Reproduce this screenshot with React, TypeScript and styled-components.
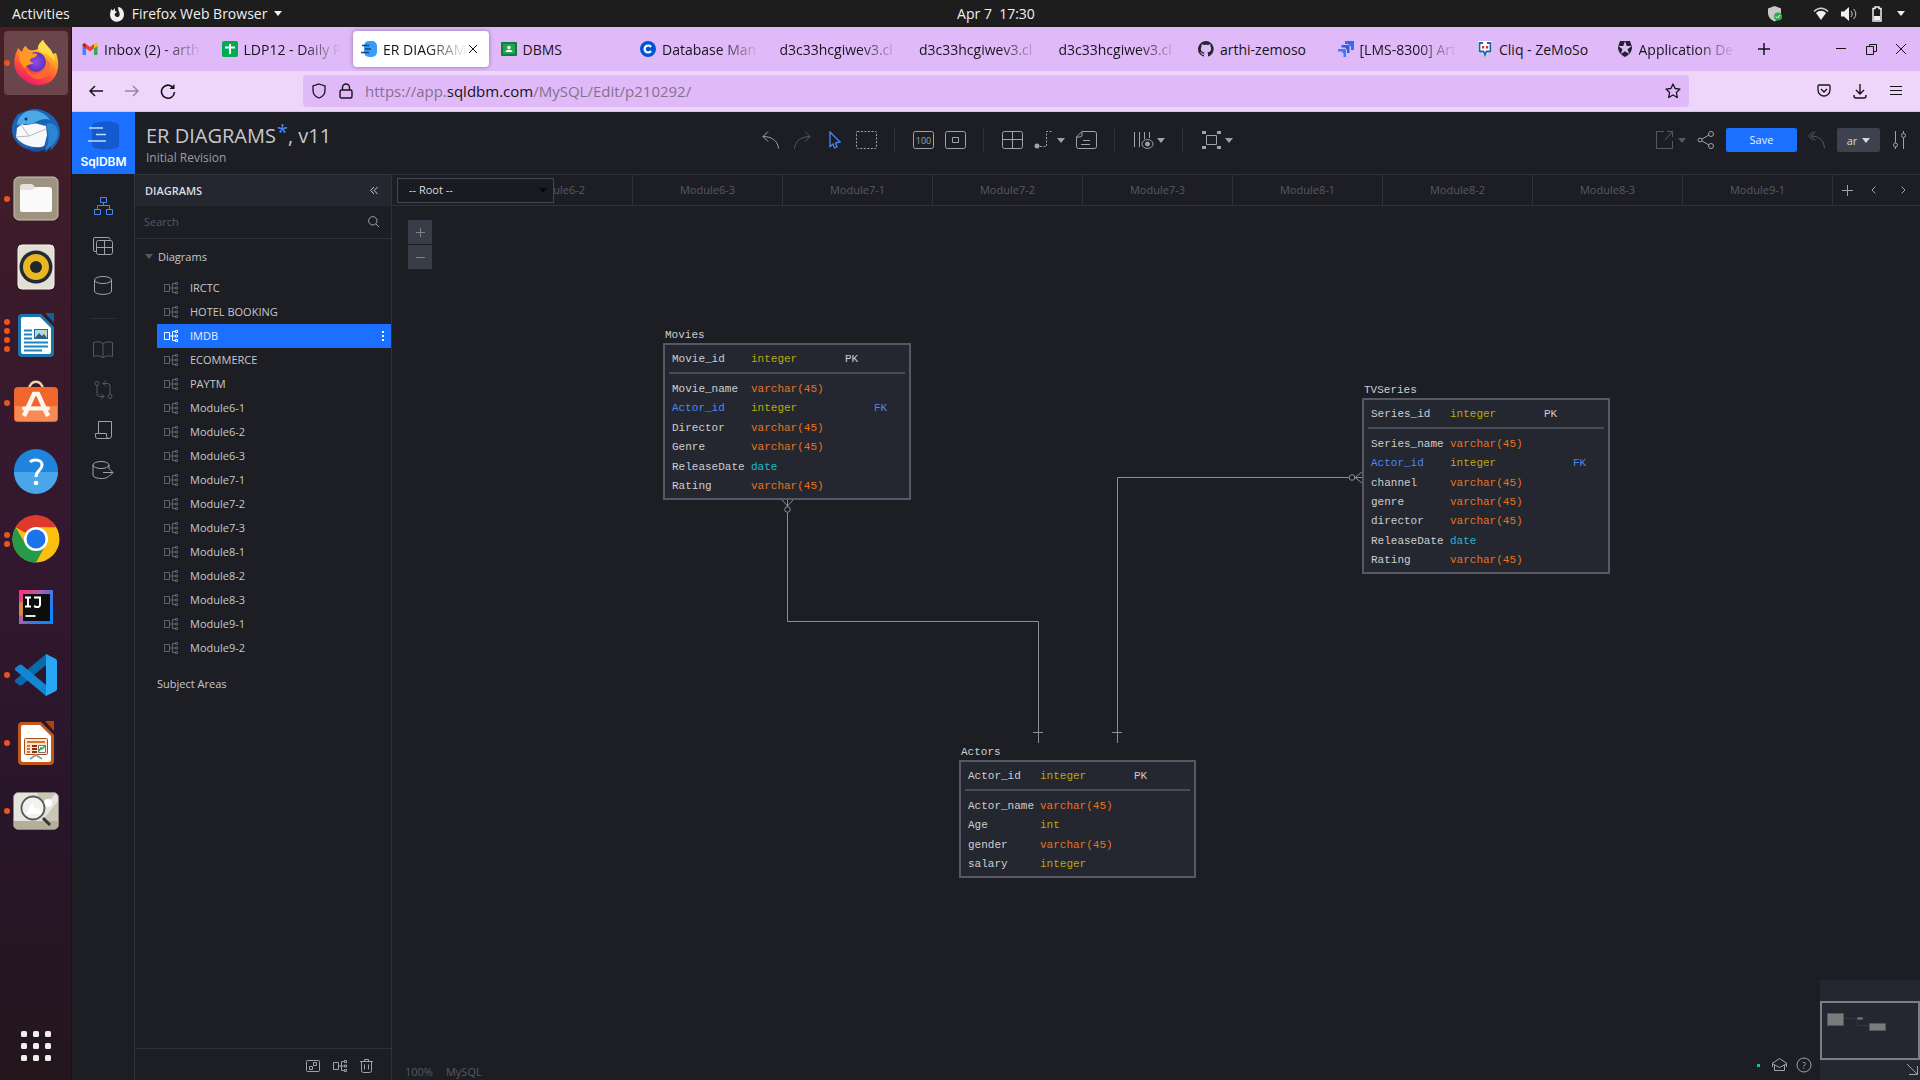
import React from "react";
import styled, { createGlobalStyle } from "styled-components";

const c = {
  bg: "#1d1e23",
  panel: "#24272f",
  line: "#2f323a",
  blue: "#1b70ff",
  link: "#4a86f7",
  text: "#c6c8cc",
  icon: "#9fa2a8",
  dim: "#565965",
  tabBar: "#e0baf8",
  navBar: "#eed5fa",
};

const Global = createGlobalStyle`
  * { box-sizing: border-box; }
  html, body, #root { height: 100%; }
  body { margin: 0; overflow: hidden; background: ${c.bg}; font-family: "Open Sans", "Noto Sans", sans-serif; }
  button { border: 0; padding: 0; background: none; color: inherit; font: inherit; cursor: pointer; }
  ul { list-style: none; margin: 0; padding: 0; }
  svg { display: block; flex: none; }
`;

const Desktop = styled.div`
  display: grid;
  grid-template: 27px minmax(0, 1fr) / 72px minmax(0, 1fr);
  height: 100vh;
`;

/* ---------- shared ---------- */
const Line = styled.svg<{ $weight?: number }>`
  fill: none;
  stroke: currentColor;
  stroke-width: ${(p) => p.$weight || 1};
`;
const Caret = () => (
  <svg width="8" height="5" viewBox="0 0 8 5" fill="currentColor"><path d="M0 0h8L4 5z" /></svg>
);

/* ---------- system bar ---------- */
const SystemBar = styled.header`
  grid-column: 1 / -1;
  display: grid;
  grid-template-columns: 1fr 80px calc(50% - 76px);
  align-items: center;
  background: #1d1d1d;
  color: #f0f0f0;
  font-size: 14px;
`;
const SystemMenus = styled.nav`
  display: flex;
  align-items: center;
  gap: 39px;
  padding-left: 12px;
`;
const SystemMenu = styled.button`
  display: flex;
  align-items: center;
  gap: 7px;
`;
const Clock = styled.time`
  text-align: center;
  white-space: pre;
`;
const Tray = styled.div`
  display: flex;
  align-items: center;
  justify-content: flex-end;
  gap: 12px;
  padding-right: 15px;
`;
const TrayGap = styled.span`
  width: 6px;
`;

/* ---------- dock ---------- */
const Dock = styled.nav`
  display: flex;
  flex-direction: column;
  gap: 4px;
  padding: 4px 4px 2px;
  background: linear-gradient(#471f24 0, #3a1a2a 25%, #32182f 50%, #28152a 75%, #24161c 100%);
  border-right: 1px solid #1a1216;
`;
const DockButton = styled.button<{ $active?: boolean }>`
  display: grid;
  grid-template-columns: 6px 48px 6px;
  justify-content: space-between;
  align-items: center;
  width: 64px;
  height: 64px;
  border-radius: 4px;
  background: ${(p) => (p.$active ? "#6a4549" : "none")};
`;
const Dots = styled.span`
  display: grid;
  gap: 3px;
`;
const Dot = styled.i`
  width: 6px;
  height: 6px;
  border-radius: 50%;
  background: #e95420;
`;
const DockSpring = styled.div`
  flex: 1;
`;

/* ---------- browser ---------- */
const Browser = styled.main`
  display: flex;
  flex-direction: column;
  min-width: 0;
  min-height: 0;
`;
const BrowserTabs = styled.div`
  display: flex;
  height: 44px;
  background: ${c.tabBar};
  color: #15141a;
`;
const TabStrip = styled.div`
  display: flex;
  flex: 1;
  min-width: 0;
  padding: 4px 0;
`;
const BrowserTab = styled.button<{ $active?: boolean }>`
  display: flex;
  flex: 1 1 0;
  min-width: 0;
  align-items: center;
  gap: 6px;
  margin: 0 2px;
  padding: 0 8px;
  border-radius: 4px;
  font-size: 14px;
  background: ${(p) => (p.$active ? "#fff" : "none")};
  box-shadow: ${(p) => (p.$active ? "0 0 4px rgba(70, 30, 100, 0.5)" : "none")};
`;
const TabLabel = styled.span<{ $fade?: boolean }>`
  flex: 1;
  min-width: 0;
  overflow: hidden;
  text-align: left;
  white-space: nowrap;
  mask-image: ${(p) => (p.$fade ? "linear-gradient(to left, transparent 0, #000 40px)" : "none")};
`;
const TabClose = styled(Line)`
  margin: 0 4px 0 -4px;
`;
const WindowControls = styled.div`
  display: grid;
  grid-template-columns: 36px 1fr 30px 30px 30px;
  width: 174px;
  padding-right: 4px;
  align-items: center;
  justify-items: center;
`;
const NavBar = styled.div`
  display: grid;
  grid-template-columns: 1fr 6fr 1fr;
  align-items: center;
  height: 41px;
  border-bottom: 1px solid #dfbdf3;
  background: ${c.navBar};
  color: #15141a;
`;
const NavButtons = styled.div<{ $end?: boolean }>`
  display: flex;
  justify-content: ${(p) => (p.$end ? "flex-end" : "flex-start")};
  padding: 0 6px;
`;
const NavButton = styled.button<{ $off?: boolean }>`
  display: grid;
  place-items: center;
  width: 36px;
  height: 32px;
  opacity: ${(p) => (p.$off ? 0.4 : 1)};
`;
const UrlBar = styled.div`
  display: flex;
  align-items: center;
  gap: 12px;
  height: 32px;
  padding: 0 8px;
  border-radius: 4px;
  background: ${c.tabBar};
`;
const Url = styled.div`
  flex: 1;
  font-size: 15px;
  color: #86708f;
  outline: none;
`;
const Domain = styled.span`
  color: #15141a;
`;

/* ---------- app ---------- */
const AppShell = styled.div`
  display: flex;
  flex: 1;
  flex-direction: column;
  min-height: 0;
  background: ${c.bg};
  color: ${c.text};
`;
const AppHeader = styled.header`
  display: grid;
  grid-template-columns: 1fr auto 1fr;
  align-items: center;
  height: 62px;
`;
const Brand = styled.div`
  display: flex;
  height: 62px;
  gap: 11px;
`;
const Logo = styled.a`
  display: flex;
  flex-direction: column;
  align-items: center;
  width: 63px;
  padding-top: 9px;
  background: ${c.blue};
  color: #fff;
  font: 600 12px/16px "Inter", sans-serif;
  text-decoration: none;
`;
const LogoText = styled.span`
  margin-top: 4px;
`;
const Titles = styled.div`
  display: flex;
  flex-direction: column;
  padding-top: 10px;
`;
const Title = styled.h1`
  margin: 0;
  font-size: 20px;
  font-weight: 400;
  line-height: 28px;
`;
const Star = styled.sup`
  margin-left: 1px;
  color: ${c.link};
  line-height: 0;
  vertical-align: 4px;
  font-size: 20px;
`;
const Subtitle = styled.span`
  font-size: 12px;
  line-height: 16px;
  color: #9a9da3;
`;
const Tools = styled.div<{ $end?: boolean }>`
  display: flex;
  align-items: center;
  justify-content: ${(p) => (p.$end ? "flex-end" : "center")};
  gap: 11px;
  padding: ${(p) => (p.$end ? "0 12px 6px 0" : "0 0 6px 1px")};
  color: ${c.icon};
`;
const Tool = styled.button<{ $tone?: string; $w?: number }>`
  display: flex;
  align-items: center;
  justify-content: ${(p) => (p.$w ? "space-between" : "center")};
  min-width: ${(p) => p.$w || 21}px;
  height: 24px;
  color: ${(p) => p.$tone || "inherit"};
`;
const Divider = styled.span`
  width: 1px;
  height: 24px;
  margin: 0 7px 0 6px;
  background: ${c.line};
`;
const SaveButton = styled.button`
  width: 71px;
  height: 24px;
  padding-bottom: 2px;
  border-radius: 2px;
  background: ${c.blue};
  color: #e8f0ff;
  font-size: 11px;
`;
const UserButton = styled.button`
  display: flex;
  align-items: center;
  justify-content: center;
  gap: 5px;
  width: 43px;
  height: 24px;
  border-radius: 2px;
  background: #3d424e;
  color: #d5d7da;
  font-size: 11px;
`;
const Workspace = styled.div`
  display: grid;
  grid-template-columns: 62px 258px minmax(0, 1fr);
  flex: 1;
  min-height: 0;
`;
const Rail = styled.nav`
  display: flex;
  flex-direction: column;
  align-items: center;
  padding-top: 12px;
`;
const RailButton = styled.button<{ $tone?: string }>`
  display: grid;
  place-items: center;
  width: 40px;
  height: 40px;
  color: ${(p) => p.$tone || c.icon};
`;
const RailRule = styled.hr`
  width: 24px;
  margin: 12px 0 11px;
  border: 0;
  border-top: 1px solid ${c.line};
`;
const SidePanel = styled.aside`
  display: flex;
  flex-direction: column;
  border: solid ${c.line};
  border-width: 1px 1px 0;
  font-size: 11px;
`;
const PanelHead = styled.div`
  display: flex;
  align-items: center;
  justify-content: space-between;
  height: 31px;
  padding: 0 13px 0 10px;
  background: ${c.panel};
`;
const PanelTitle = styled.h2`
  margin: 0;
  font-size: 11px;
  font-weight: 600;
  color: #dcdde0;
`;
const SearchBox = styled.label`
  display: flex;
  align-items: center;
  height: 33px;
  padding: 0 12px 2px 9px;
  border-bottom: 1px solid ${c.line};
  color: ${c.icon};
`;
const SearchInput = styled.input`
  flex: 1;
  min-width: 0;
  padding: 0;
  border: 0;
  outline: 0;
  background: none;
  color: ${c.text};
  font: 11px "Open Sans", sans-serif;
  &::placeholder { color: ${c.dim}; opacity: 1; }
`;
const Tree = styled.div`
  flex: 1;
  padding: 6px 0 0 22px;
`;
const TreeHeading = styled.button<{ $plain?: boolean }>`
  display: flex;
  align-items: center;
  gap: 5px;
  height: 24px;
  padding-bottom: 2px;
  margin-left: ${(p) => (p.$plain ? "0" : "-12px")};
  color: ${c.text};
  & > svg { color: ${c.dim}; }
`;
const TreeList = styled.ul`
  padding: 7px 0 12px;
`;
const TreeItem = styled.button<{ $active?: boolean }>`
  display: flex;
  align-items: center;
  gap: 12px;
  width: 100%;
  height: 24px;
  padding: 0 6px 0 7px;
  background: ${(p) => (p.$active ? c.blue : "none")};
  color: ${(p) => (p.$active ? "#e6efff" : c.text)};
  & > svg { color: ${(p) => (p.$active ? "#fff" : "#62656f")}; }
`;
const TreeLabel = styled.span`
  flex: 1;
  padding-bottom: 2px;
  text-align: left;
`;
const PanelFoot = styled.div`
  display: flex;
  align-items: center;
  justify-content: flex-end;
  gap: 13px;
  height: 32px;
  padding: 2px 18px 0;
  border-top: 1px solid ${c.line};
  color: ${c.icon};
`;
const Stage = styled.section`
  display: flex;
  flex-direction: column;
  min-width: 0;
  min-height: 0;
`;
const DiagramTabs = styled.div`
  display: flex;
  height: 32px;
  border: solid ${c.line};
  border-width: 1px 0;
  color: ${c.dim};
  font-size: 11px;
`;
const RootPicker = styled.div`
  display: grid;
  grid-template-columns: 1fr;
  align-items: center;
  flex: none;
  width: 162px;
  padding-left: 5px;
  color: #08090b;
  & > * { grid-area: 1 / 1; }
  & > svg { justify-self: end; margin-right: 7px; pointer-events: none; z-index: 1; }
`;
const RootSelect = styled.select`
  width: 157px;
  height: 25px;
  padding: 0 11px 2px;
  appearance: none;
  border: 1px solid #434753;
  border-radius: 0;
  background: #1a1b20;
  color: #dadbde;
  font: 11px "Open Sans", sans-serif;
`;
const TabScroller = styled.div`
  display: flex;
  flex: 1;
  justify-content: flex-end;
  min-width: 0;
  overflow: hidden;
`;
const DiagramTab = styled.button`
  flex: none;
  width: 150px;
  padding-bottom: 2px;
  border-right: 1px solid ${c.line};
`;
const TabActions = styled.div`
  display: grid;
  grid-template-columns: 28px 25px 34px;
  align-items: center;
  justify-items: center;
  color: ${c.icon};
`;
const Canvas = styled.div`
  position: relative;
  flex: 1;
  overflow: hidden;
`;
const ZoomControl = styled.div`
  position: absolute;
  left: 16px;
  top: 14px;
  display: grid;
  gap: 1px;
`;
const ZoomButton = styled.button`
  display: grid;
  place-items: center;
  width: 24px;
  height: 24px;
  background: #393d47;
  color: #7e828c;
`;
const Wires = styled.svg`
  position: absolute;
  inset: 0;
  width: 100%;
  height: 100%;
  fill: none;
  stroke: #8b8e97;
  stroke-width: 1;
`;
const Entity = styled.div<{ $x: number; $y: number; $w: number }>`
  position: absolute;
  left: ${(p) => p.$x}px;
  top: ${(p) => p.$y}px;
  width: ${(p) => p.$w}px;
  font: 11px/16px "Liberation Mono", monospace;
  color: #cdced1;
`;
const EntityName = styled.h3`
  margin: 0 2px;
  font: inherit;
`;
const EntityTable = styled.table<{ $h: number }>`
  display: flex;
  flex-direction: column;
  height: ${(p) => p.$h}px;
  padding: 0 4px 2px;
  border: 2px solid #565965;
  background: ${c.panel};
`;
const KeyRows = styled.thead`
  display: grid;
  height: 29px;
  margin-bottom: 5px;
  border-bottom: 2px solid #494c57;
`;
const FieldRows = styled.tbody`
  display: grid;
  grid-auto-rows: 1fr;
  flex: 1;
`;
const Field = styled.tr<{ $first: number; $fk?: boolean }>`
  display: grid;
  grid-template-columns: ${(p) => p.$first}px 94px 29px 1fr;
  align-items: center;
  padding-left: 3px;
  color: ${(p) => (p.$fk ? c.link : "inherit")};
`;
const Cell = styled.td<{ $tone?: string }>`
  padding: 0;
  color: ${(p) => p.$tone || "inherit"};
`;
const Status = styled.footer`
  position: absolute;
  left: 13px;
  bottom: 0;
  display: flex;
  gap: 13px;
  color: ${c.dim};
  font-size: 11px;
  line-height: 16px;
`;
const Help = styled.div`
  position: absolute;
  right: 108px;
  bottom: 7px;
  display: flex;
  align-items: center;
  gap: 8px;
  color: ${c.icon};
`;
const Online = styled.i`
  width: 3px;
  height: 3px;
  margin-right: 3px;
  background: #12c77c;
`;
const MiniMap = styled.div`
  position: absolute;
  right: 0;
  bottom: 0;
  display: flex;
  flex-direction: column;
  align-items: flex-end;
  width: 100px;
  height: 100px;
  padding-top: 21px;
  background: ${c.panel};
  color: ${c.icon};
`;
const MiniView = styled.div`
  width: 100%;
  height: 59px;
  border: 2px solid #7d7e80;
`;
const Collapse = styled.button`
  margin: 4px 2px;
`;

/* ---------- data ---------- */
type Row = [string, string, boolean?];
const tones: Record<string, string> = { integer: "#baa80f", int: "#baa80f", "varchar(45)": "#e8731e", date: "#1eb9ce" };
const entities: { name: string; x: number; y: number; w: number; h: number; first: number; key: string; rows: Row[] }[] = [
  {
    name: "Movies", x: 271, y: 121, w: 248, h: 157, first: 79, key: "Movie_id",
    rows: [["Movie_name", "varchar(45)"], ["Actor_id", "integer", true], ["Director", "varchar(45)"], ["Genre", "varchar(45)"], ["ReleaseDate", "date"], ["Rating", "varchar(45)"]],
  },
  {
    name: "TVSeries", x: 970, y: 176, w: 248, h: 176, first: 79, key: "Series_id",
    rows: [["Series_name", "varchar(45)"], ["Actor_id", "integer", true], ["channel", "varchar(45)"], ["genre", "varchar(45)"], ["director", "varchar(45)"], ["ReleaseDate", "date"], ["Rating", "varchar(45)"]],
  },
  {
    name: "Actors", x: 567, y: 538, w: 237, h: 118, first: 72, key: "Actor_id",
    rows: [["Actor_name", "varchar(45)"], ["Age", "int"], ["gender", "varchar(45)"], ["salary", "integer"]],
  },
];
const diagrams = ["IRCTC", "HOTEL BOOKING", "IMDB", "ECOMMERCE", "PAYTM", "Module6-1", "Module6-2", "Module6-3", "Module7-1", "Module7-2", "Module7-3", "Module8-1", "Module8-2", "Module8-3", "Module9-1", "Module9-2"];
const openTabs = ["Module6-2", "Module6-3", "Module7-1", "Module7-2", "Module7-3", "Module8-1", "Module8-2", "Module8-3", "Module9-1"];

/* ---------- favicons ---------- */
const Fav = ({ children }: { children: React.ReactNode }) => <svg width="16" height="16" viewBox="0 0 16 16">{children}</svg>;
const Gmail = () => (
  <Fav>
    <path fill="#4285f4" d="M1 14h3V7L.5 4.500V13z" /><path fill="#34a853" d="M12 14h3l.5-1V4.500L12 7z" />
    <path fill="#ea4335" d="M4 3l4 3 4-3v4.500l-4 3-4-3z" /><path fill="#c5221f" d="M.5 4C.5 2 3 2 4 3v4.500L.5 5z" /><path fill="#fbbc04" d="M15.500 4c0-2-2.500-2-3.500-1v4.500L15.500 5z" />
  </Fav>
);
const Sheets = () => (<Fav><rect width="16" height="16" rx="2" fill="#00ac4e" /><path d="M8 3v10M3 6.500h10" stroke="#fff" strokeWidth="2" /></Fav>);
const SqlFav = () => (<Fav><rect x="3" y="0" width="13" height="16" rx="5" fill="#3a9bff" /><path d="M1 4.500h7M4 8h6M0 11.500h8" stroke="#16446f" strokeWidth="1.300" /></Fav>);
const Classroom = () => (<Fav><rect y="1" width="16" height="14" rx="1" fill="#137c38" /><rect x="2" y="3" width="12" height="10" fill="#23a455" /><circle cx="8" cy="6.500" r="1.700" fill="#fff" /><path d="M4.500 11c0-3 7-3 7 0z" fill="#fff" /></Fav>);
const Coursera = () => (<Fav><circle cx="8" cy="8" r="8" fill="#0056d2" /><path d="M11 6a3.500 3.500 0 1 0 0 4" fill="none" stroke="#fff" strokeWidth="2.200" /></Fav>);
const Github = () => (<Fav><path fill="#24292f" d="M8 0a8 8 0 0 0-2.530 15.590c.4.070.550-.17.550-.38v-1.490C3.800 14.200 3.330 12.650 3.330 12.650c-.36-.92-.89-1.170-.89-1.170-.73-.5.050-.49.050-.49.800.060 1.230.830 1.230.830.710 1.220 1.870.870 2.330.660.070-.52.280-.87.500-1.070-1.770-.2-3.640-.89-3.640-3.950 0-.87.310-1.590.820-2.150-.08-.2-.36-1.020.080-2.120 0 0 .670-.21 2.200.820a7.600 7.600 0 0 1 4 0c1.530-1.040 2.200-.82 2.200-.82.440 1.100.160 1.920.080 2.120.510.560.820 1.270.820 2.150 0 3.070-1.870 3.750-3.650 3.950.290.250.540.730.540 1.480v2.190c0 .210.150.460.550.380A8 8 0 0 0 8 0z" /></Fav>);
const Jira = () => (<Fav><path fill="#2f6df6" d="M7 0h9v9h-3V5.500L10 3H7z" /><path fill="#2a5fe0" d="M3.500 4h8v8H9V8.500L7 6.500H3.500z" /><path fill="#3b7bff" d="M0 8h8v8H5.500v-3.500l-2-2H0z" /></Fav>);
const Cliq = () => (<Fav><path d="M1 0h14v12h-4l-3 4-3-4H1z" fill="#fff" /><path d="M6 2H2.500v8.500h4L8 14l1.500-3.500h4V2H10" fill="none" stroke="#2064b0" strokeWidth="1.800" /><path d="M5 5h2.200v2.500H5zM9 5h2.200v2.500H9z" fill="#e12b2b" /></Fav>);
const Auth0 = () => (<Fav><path fill="#20222d" d="M3 0h10l2 6c0 5-3 8-7 10-4-2-7-5-7-10z" /><path fill="#e0baf8" d="M8 0l1.700 5h5L10.500 8.200 12.200 13 8 10.200 3.800 13l1.700-4.800L1.300 5h5z" /></Fav>);

const browserTabs: { label: string; icon?: React.ReactNode; active?: boolean; fade?: boolean }[] = [
  { label: "Inbox (2) - arth", icon: <Gmail />, fade: true },
  { label: "LDP12 - Daily P", icon: <Sheets />, fade: true },
  { label: "ER DIAGRAM", icon: <SqlFav />, active: true, fade: true },
  { label: "DBMS", icon: <Classroom /> },
  { label: "Database Man", icon: <Coursera />, fade: true },
  { label: "d3c33hcgiwev3.cl", fade: true },
  { label: "d3c33hcgiwev3.cl", fade: true },
  { label: "d3c33hcgiwev3.cl", fade: true },
  { label: "arthi-zemoso", icon: <Github /> },
  { label: "[LMS-8300] Art", icon: <Jira />, fade: true },
  { label: "Cliq - ZeMoSo", icon: <Cliq /> },
  { label: "Application De", icon: <Auth0 />, fade: true },
];

/* ---------- dock icons ---------- */
const App48 = ({ children }: { children: React.ReactNode }) => <svg width="48" height="48" viewBox="0 0 48 48">{children}</svg>;
const Firefox = () => (
  <App48>
    <defs>
      <linearGradient id="ffa" x1=".8" y1="0" x2=".3" y2="1"><stop offset="0" stopColor="#fff44f" /><stop offset=".35" stopColor="#ffa52a" /><stop offset=".7" stopColor="#ff4a36" /><stop offset="1" stopColor="#e5157c" /></linearGradient>
      <radialGradient id="ffb"><stop offset="0" stopColor="#8d4bf0" /><stop offset="1" stopColor="#5b35b4" /></radialGradient>
    </defs>
    <path fill="url(#ffa)" d="M26 10c0-5 3-7 5-9 2 5 6 7 8 10l2 4 3-1c5 13 1 24-6 29-8 5-20 4-27-3C1 33 1 22 4 14l2-5 4 4c1-4 2-5 4-6 1 3 4 6 12 3z" />
    <circle cx="24" cy="23" r="10" fill="url(#ffb)" />
    <path fill="#ff9a22" d="M7 14c5-3 9-2 12 0 3 1 7 0 6 2-1 3-7 3-7 5 0 2 2 2 4 3-5 2-9 2-9 6-5-5-6-10-6-16z" />
    <path fill="#ffe048" d="M26 10c0-5 3-7 5-9 2 5 12 11 12 23-2-5-5-7-7-8-4-2-9-2-10-6z" opacity=".85" />
    <path fill="#ff6a32" d="M13 26c2 9 11 11 17 7 5-4 6-10 3-14 8 5 7 16-1 20-9 4-19-3-19-13z" opacity=".9" />
  </App48>
);
const Thunderbird = () => (
  <App48>
    <path fill="#1d62b5" d="M14 4C24-2 47 5 48 25c0 10-7 16-10 19l1-5-6 7 1-4c-15 5-32-2-34-17-1-8 3-14 6-18l8-3z" />
    <path fill="#4aaae8" d="M12 6c8-5 20-2 26 7-7-3-12 1-16 3C16 18 9 16 5 18c0-5 3-9 7-12z" />
    <path fill="#f8f8fa" d="M5 21l5-4c4 3 12-2 16 0l8 2 1 9-3 12c-11 1-22-1-28-10z" />
    <path fill="none" stroke="#b6b7bf" d="M9 18l8 11 17-7M17 29L4 30" />
    <path fill="#2b84d4" d="M34 17c8-3 12 3 12 10-1 8-6 12-13 16 5-7 4-17 1-26z" />
    <path fill="#1b4f9c" d="M14 41c8 2 14 0 20-3l-2 5c-7 3-13 2-18-2z" />
    <circle cx="14" cy="12" r="1.500" fill="#14345e" />
  </App48>
);
const Files = () => (
  <App48><rect x="2" y="2" width="44" height="43" rx="5" fill="#9c9480" stroke="#c9c4b4" strokeWidth="1" /><path fill="#e4e1d6" d="M8 12q0-3 3-3h9l4 4v4H8z" /><path fill="#fafafa" d="M8 15h12l4-3h13q3 0 3 3v20q0 2-2 2H10q-2 0-2-2z" /></App48>
);
const Rhythm = () => (
  <App48><rect x="6" y="2" width="36" height="44" rx="4" fill="#e3dfd4" stroke="#f4f2ea" /><circle cx="24" cy="24" r="16.500" fill="#232a33" /><circle cx="24" cy="24" r="13" fill="#e8b822" /><circle cx="24" cy="24" r="6" fill="#22252a" /></App48>
);
const Writer = () => (
  <App48>
    <path fill="#1b76ac" d="M10 3h19l13 13v26q0 4-4 4H10q-4 0-4-4V7q0-4 4-4z" /><path fill="#fff" d="M11 6h17l11 11v24q0 2-2 2H11q-2 0-2-2V8q0-2 2-2z" /><path fill="#0e6297" d="M33 2h9v10z" />
    <path stroke="#1b85bd" strokeWidth="2" d="M12 19.500h8M12 23.500h8M12 27.500h8M12 31.500h24M12 35.500h24M12 39.500h18" /><rect x="22.500" y="18.500" width="13" height="9" fill="#a6dcf5" stroke="#1b6c9d" /><path fill="#4b5560" d="M23 27l4-5 3 3 2-2 3 4z" /><circle cx="33" cy="20.500" r="1.500" fill="#fc3" />
  </App48>
);
const Software = () => (
  <App48><path fill="none" stroke="#f3d3a4" strokeWidth="2.500" d="M17 11c0-11 14-11 14 0" /><rect x="2" y="8" width="44" height="35" rx="4" fill="#f0662c" /><path fill="#f68b54" d="M3 27h42v13q0 2-2 2H5q-2 0-2-2z" /><path fill="none" stroke="#fff6ee" strokeWidth="4.500" d="M12 37l10-22h4l10 22" /><path stroke="#fff6ee" strokeWidth="4" strokeLinecap="round" d="M12 29.500h24" /></App48>
);
const HelpApp = () => (
  <App48><circle cx="24" cy="24" r="22" fill="#1f84dc" /><path fill="#49a6ea" d="M2 25h44a22 22 0 0 1-44 0z" /><path fill="none" stroke="#fff" strokeWidth="3" d="M18 15c3-3 12-3 12 3 0 6-6 5-6 12" /><circle cx="24" cy="36" r="2.300" fill="#fff" /></App48>
);
const Chrome = () => (
  <App48><circle cx="24" cy="24" r="23.500" fill="#fbbf12" /><path fill="#dd3a2c" d="M24 24L3.600 12.200A23.500 23.500 0 0 1 44.400 12.200H24z" /><path fill="#269a48" d="M3.600 12.200L14 30l10 6-6.700 10.600A23.500 23.500 0 0 1 3.600 12.200z" /><path fill="#269a48" d="M14 29l10 6 9-4-9 16.500q-5 0-7.500-1z" /><circle cx="24" cy="24" r="12" fill="#fff" /><circle cx="24" cy="24" r="9.500" fill="#1a73e8" /></App48>
);
const Idea = () => (
  <App48>
    <defs><linearGradient id="ij" x1="0" y1="0" x2="1" y2=".7"><stop offset="0" stopColor="#fe2d76" /><stop offset=".45" stopColor="#b45fa8" /><stop offset=".6" stopColor="#5f70d4" /><stop offset="1" stopColor="#0a84ff" /></linearGradient></defs>
    <rect x="7" y="7" width="34" height="34" fill="url(#ij)" /><path fill="#d48a3f" d="M7 20l5-2v14l-5 1z" /><rect x="11" y="11" width="27" height="27" fill="#0d0d0d" /><path fill="none" stroke="#fff" strokeWidth="2" d="M13 14.500h6M16 14.500v9M13 23.500h6M22 14.500h6v7q0 3-4 2.500l-2-1" /><path fill="#e6e6e6" d="M13.500 32h10v2h-10z" />
  </App48>
);
const Code = () => (
  <App48><path fill="#0a69ab" d="M3 31l4 3q1 1 3 0L34 14V3L3 29z" /><path fill="#1187d3" d="M3 17l4-3q1-1 3 0l24 20v11L3 19z" /><path fill="#2aa7f2" d="M34 3l10 5q1 1 1 2v28q0 1-1 2l-10 5z" /></App48>
);
const Impress = () => (
  <App48>
    <path fill="#c0571c" d="M10 3h19l13 13v26q0 4-4 4H10q-4 0-4-4V7q0-4 4-4z" /><path fill="#fff" d="M11 6h17l11 11v24q0 2-2 2H11q-2 0-2-2V8q0-2 2-2z" /><path fill="#a6480f" d="M33 2h9v10z" />
    <rect x="12.500" y="19.500" width="23" height="16" rx="1" fill="#fbe3d0" stroke="#a1501f" /><path stroke="#e0702c" strokeWidth="2" d="M15 23h18M15 27h3M15 30h3M15 33h3" /><path stroke="#8c2f0c" strokeWidth="2" d="M20 27h5M20 30h5M20 33h5" /><path fill="#fff" stroke="#777" d="M26.500 26.500h7v7h-7z" /><path stroke="#25a13a" fill="none" strokeWidth="1.500" d="M27 32l2-3 1 1 3-3" /><path stroke="#999" strokeWidth="2" fill="none" d="M18 40l6-4 6 4" />
  </App48>
);
const Viewer = () => (
  <App48><rect x="1.500" y="5.500" width="45" height="37" rx="5" fill="#e5e5dd" stroke="#8b877a" /><path fill="#c9c6b8" d="M46 14L30 34h16zM25 6h19L30 22z" /><path fill="#b5ae9b" d="M2 34h44v4q0 4-4 4H6q-4 0-4-4z" /><circle cx="36" cy="16" r="4" fill="#fff" /><circle cx="21" cy="21" r="11.500" fill="#f1f1ed" stroke="#5a5a5a" strokeWidth="1.800" /><path fill="#fff" d="M14 27l6-11 4 7 2-3 4 7z" /><path stroke="#333" strokeWidth="3" d="M31 31l7 7" /></App48>
);
const AppGrid = () => (
  <App48>{[10, 22, 34].map((y) => [10, 22, 34].map((x) => <rect key={`${x}-${y}`} x={x - 1} y={y - 1} width="6" height="6" rx="1.500" fill="#efefef" />))}</App48>
);
const dockApps: [string, React.ReactNode, number][] = [
  ["Firefox", <Firefox />, 1], ["Thunderbird", <Thunderbird />, 0], ["Files", <Files />, 1], ["Rhythmbox", <Rhythm />, 0], ["Writer", <Writer />, 4], ["Software", <Software />, 1],
  ["Help", <HelpApp />, 0], ["Chrome", <Chrome />, 2], ["IntelliJ IDEA", <Idea />, 0], ["Code", <Code />, 1], ["Impress", <Impress />, 1], ["Image Viewer", <Viewer />, 1],
];

/* ---------- small line icons ---------- */
const DiagramIcon = () => (
  <Line width="14" height="12" viewBox="0 0 14 12"><path d="M.5 2.500h5v7h-5zM5.500 6h6M8.500 1.500v9M8.500 1.500h3M8.500 10.500h3M11.500.5h2v2h-2zM11.500 5h2v2h-2zM11.500 9.500h2v2h-2z" /></Line>
);

function Dockbar() {
  return (
    <Dock aria-label="Dock">
      {dockApps.map(([name, icon, windows], i) => (
        <DockButton key={name} aria-label={name} $active={i === 0}>
          <Dots>{Array.from({ length: windows }, (_, n) => <Dot key={n} />)}</Dots>
          {icon}
        </DockButton>
      ))}
      <DockSpring />
      <DockButton aria-label="Show applications"><span /><AppGrid /></DockButton>
    </Dock>
  );
}

function BrowserChrome() {
  return (
    <>
      <BrowserTabs>
        <TabStrip>
          {browserTabs.map((t, i) => (
            <BrowserTab key={i} $active={t.active}>
              {t.icon}
              <TabLabel $fade={t.fade}>{t.label}</TabLabel>
              {t.active && <TabClose width="8" height="8" viewBox="0 0 8 8"><path d="M0 0l8 8M8 0L0 8" /></TabClose>}
            </BrowserTab>
          ))}
        </TabStrip>
        <WindowControls>
          <button aria-label="New tab"><Line width="12" height="12" viewBox="0 0 12 12" $weight={1.5}><path d="M6 0v12M0 6h12" /></Line></button>
          <span />
          <button aria-label="Minimize"><Line width="10" height="12" viewBox="0 0 10 12"><path d="M0 5.500h10" /></Line></button>
          <button aria-label="Restore"><Line width="11" height="11" viewBox="0 0 11 11"><path d="M.5 2.500h7v8h-7zM3.500 2.500v-2h7v7h-3" /></Line></button>
          <button aria-label="Close"><Line width="10" height="10" viewBox="0 0 10 10"><path d="M0 0l10 10M10 0L0 10" /></Line></button>
        </WindowControls>
      </BrowserTabs>
      <NavBar>
        <NavButtons>
          <NavButton aria-label="Back"><Line width="14" height="12" viewBox="0 0 14 12" $weight={1.5}><path d="M14 6H1M6 1L1 6l5 5" /></Line></NavButton>
          <NavButton aria-label="Forward" $off><Line width="14" height="12" viewBox="0 0 14 12" $weight={1.5}><path d="M0 6h13M8 1l5 5-5 5" /></Line></NavButton>
          <NavButton aria-label="Reload"><Line width="16" height="16" viewBox="0 0 16 16" $weight={1.6}><path d="M13 4.500A6.500 6.500 0 1 0 14.500 9" /><path d="M14.500 1v5h-5z" fill="currentColor" stroke="none" /></Line></NavButton>
        </NavButtons>
        <UrlBar>
          <Line width="16" height="16" viewBox="0 0 16 16" $weight={1.3}><path d="M8 1l6 2v4c0 4-3 7-6 8-3-1-6-4-6-8V3z" /></Line>
          <Line width="14" height="16" viewBox="0 0 14 16" $weight={1.4}><rect x="1" y="7" width="12" height="8" rx="1.500" /><path d="M3.500 7V4.500a3.500 3.500 0 0 1 7 0V7" /></Line>
          <Url role="textbox" aria-label="Address" tabIndex={0}>https://app.<Domain>sqldbm.com</Domain>/MySQL/Edit/p210292/</Url>
          <Line width="16" height="16" viewBox="0 0 16 16" $weight={1.3}><path d="M8 1l2.100 4.500 4.900.6-3.600 3.400.9 5L8 12l-4.300 2.500.9-5L1 6.100l4.900-.6z" strokeLinejoin="round" /></Line>
        </UrlBar>
        <NavButtons $end>
          <NavButton aria-label="Pocket"><Line width="14" height="14" viewBox="0 0 14 14" $weight={1.3}><path d="M2 1h10q1 0 1 1v4a6 6 0 0 1-12 0V2q0-1 1-1zM4 5l3 3 3-3" /></Line></NavButton>
          <NavButton aria-label="Downloads"><Line width="14" height="16" viewBox="0 0 14 16" $weight={1.4}><path d="M7 1v10M3 7l4 4 4-4M1 12v1q0 2 2 2h8q2 0 2-2v-1" /></Line></NavButton>
          <NavButton aria-label="Menu"><Line width="12" height="12" viewBox="0 0 12 12"><path d="M0 1.500h12M0 5.500h12M0 9.500h12" /></Line></NavButton>
        </NavButtons>
      </NavBar>
    </>
  );
}

function Header() {
  return (
    <AppHeader>
      <Brand>
        <Logo href="#">
          <svg width="31" height="29" viewBox="0 0 31 29"><path fill="#1459cd" d="M4 5c0-6 27-6 27 0v19c0 6-27 6-27 0z" /><path stroke="#b9e1ff" strokeWidth="1.400" d="M1 7h14M8 13.500h10M0 20h18" /></svg>
          <LogoText>SqlDBM</LogoText>
        </Logo>
        <Titles>
          <Title>ER DIAGRAMS<Star>*</Star>, v11</Title>
          <Subtitle>Initial Revision</Subtitle>
        </Titles>
      </Brand>
      <Tools>
        <Tool aria-label="Undo"><Line width="17" height="18" viewBox="0 0 17 18"><path d="M1 5.500c8 0 15 4 15.500 12M6 .5L1 5.500 6 10.500" /></Line></Tool>
        <Tool aria-label="Redo" $tone={c.dim}><Line width="17" height="18" viewBox="0 0 17 18"><path d="M16 5.500C8 5.500 1 9.500.5 17.500M11 .5l5 5-5 5" /></Line></Tool>
        <Tool aria-label="Select" $tone={c.link}><Line width="12" height="18" viewBox="0 0 12 18" $weight={1.3}><path d="M1 1v14.500l3-2.500 1.500 4 2.500-1-1.500-4 4.500-1z" /></Line></Tool>
        <Tool aria-label="Area select"><Line width="21" height="18" viewBox="0 0 21 18" strokeDasharray="2 1.500"><rect x=".5" y=".5" width="20" height="17" rx="1" /></Line></Tool>
        <Divider />
        <Tool aria-label="Zoom 100"><svg width="21" height="18" viewBox="0 0 21 18"><rect x=".5" y=".5" width="20" height="17" rx="2" fill="none" stroke="currentColor" /><text x="10.500" y="12.500" textAnchor="middle" fill="currentColor" fontSize="9">100</text></svg></Tool>
        <Tool aria-label="Fit"><Line width="21" height="18" viewBox="0 0 21 18"><rect x=".5" y=".5" width="20" height="17" rx="2" /><path d="M7.500 6.500h6v5h-6z" /></Line></Tool>
        <Divider />
        <Tool aria-label="Add table"><Line width="21" height="18" viewBox="0 0 21 18"><rect x=".5" y=".5" width="20" height="17" rx="2" /><path d="M10.500 0v18M0 8.500h21" /></Line></Tool>
        <Tool aria-label="Add relation" $w={31}>
          <Line width="19" height="18" viewBox="0 0 19 18"><circle cx="3" cy="15" r="2.500" fill="currentColor" stroke="none" /><path d="M6 15.500h6.500V.5H18" strokeDasharray="2 1.500" /></Line><Caret />
        </Tool>
        <Tool aria-label="Add note"><Line width="21" height="18" viewBox="0 0 21 18"><path d="M6 .5h12.500q2 0 2 2v13q0 2-2 2h-16q-2 0-2-2V6zM6 .5V4q0 2-2 2H.5M7 9.500h7M5 13.500h9" /></Line></Tool>
        <Divider />
        <Tool aria-label="View options" $w={32}>
          <Line width="21" height="18" viewBox="0 0 21 18"><path d="M1.500 1v15M6.500 1v15M11.500 1v7M16.500 1v6" /><ellipse cx="14.500" cy="13" rx="5.500" ry="4.500" /><circle cx="14.500" cy="13" r="2" fill="currentColor" /></Line><Caret />
        </Tool>
        <Divider />
        <Tool aria-label="Layout" $w={32}>
          <Line width="20" height="18" viewBox="0 0 20 18"><path d="M5.500 4.500h10v9h-10z" /><path stroke="none" fill="currentColor" d="M1 0h4v3H1zM16 0h4v3h-4zM1 15h4v3H1zM16 15h4v3h-4z" /></Line><Caret />
        </Tool>
      </Tools>
      <Tools $end>
        <Tool aria-label="Export" $w={30} $tone={c.dim}><Line width="18" height="18" viewBox="0 0 18 18"><path d="M8 .5H.5v17h16V10M11 .5h5.500V6M16.500.5L9 9" /></Line><Caret /></Tool>
        <Tool aria-label="Share" $w={18}><Line width="17" height="18" viewBox="0 0 17 18"><circle cx="3" cy="9" r="2" /><circle cx="14" cy="3" r="2.500" /><circle cx="14" cy="15" r="2.500" /><path d="M5 8l7-4M5 10l7 4" /></Line></Tool>
        <SaveButton>Save</SaveButton>
        <Tool aria-label="Revert" $w={18} $tone={c.dim}><Line width="18" height="18" viewBox="1 0 18 18"><path d="M4 5c8 0 13 4 13.500 12.500M8.500.5L4 5l4.500 4.500M6 .5L1.500 5 6 9.500" /></Line></Tool>
        <UserButton>ar<Caret /></UserButton>
        <Tool aria-label="Settings" $w={17}><Line width="17" height="18" viewBox="1 0 17 18"><path d="M5.500 0v12M5.500 16v2M13.500 0v2M13.500 7v11" /><circle cx="5.500" cy="14" r="2" /><circle cx="13.500" cy="4.500" r="2" /></Line></Tool>
      </Tools>
    </AppHeader>
  );
}

function RailNav() {
  return (
    <Rail>
      <RailButton aria-label="Diagrams" $tone={c.link}><Line width="19" height="18" viewBox="0 0 19 18"><path d="M6.500.5h6v5h-6zM.5 12.500h6v5h-6zM12.500 12.500h6v5h-6zM9.500 5.500v3M3.500 12.500v-4h12v4" /></Line></RailButton>
      <RailButton aria-label="Tables"><Line width="20" height="18" viewBox="0 0 20 18"><rect x="3.500" y="3.500" width="16" height="14" rx="2" /><path d="M11.500 3.500v14M3.500 10.500h16M3 14.500H2q-1.500 0-1.500-1.500V2Q.5.500 2 .5h13.500q1.500 0 1.500 2" /></Line></RailButton>
      <RailButton aria-label="Database"><Line width="18" height="20" viewBox="0 0 18 20"><ellipse cx="9" cy="4" rx="8.500" ry="3.500" /><path d="M.5 4v11c0 4.500 17 4.500 17 0V4" /></Line></RailButton>
      <RailRule />
      <RailButton aria-label="Documentation" $tone={c.dim}><Line width="20" height="18" viewBox="0 0 20 18"><path d="M10 2.500C8 .5 3 .5.5 1.500v14c3-1 7.500-1 9.500 1.500 2-2.500 6.500-2.500 9.500-1.500v-14C17 .5 12 .5 10 2.500zM10 2.500V17" /></Line></RailButton>
      <RailButton aria-label="Compare" $tone={c.dim}><Line width="19" height="20" viewBox="0 0 19 20"><circle cx="3" cy="3.500" r="2" /><circle cx="16" cy="16.500" r="2" /><path d="M3 5.500V14q0 2.500 2.500 2.500H10M7 13.500l3 3-3 3M16 14.500V6q0-2.500-2.500-2.500H9M12 .5l-3 3 3 3" /></Line></RailButton>
      <RailButton aria-label="Scripts"><Line width="17" height="18" viewBox="0 0 17 18"><path d="M3.500 12.500V.5h13V15q0 2.500-2.500 2.500H2.500q-2 0-2-2v-3h11v2.500q0 2.500 2.500 2.500" /></Line></RailButton>
      <RailButton aria-label="Reverse engineer"><Line width="22" height="18" viewBox="0 0 22 18"><ellipse cx="9" cy="4" rx="8" ry="3.500" /><path d="M1 4v10c0 4 13 5 16 1M17 4v4M11 11.500h10M17.500 8l3.500 3.500-3.500 3.500" /></Line></RailButton>
    </Rail>
  );
}

function Sidebar() {
  return (
    <SidePanel>
      <PanelHead>
        <PanelTitle>DIAGRAMS</PanelTitle>
        <button aria-label="Collapse panel"><Line width="8" height="7" viewBox="0 0 8 7"><path d="M4 0L.7 3.500 4 7M7.500 0L4.200 3.500 7.500 7" /></Line></button>
      </PanelHead>
      <SearchBox>
        <SearchInput type="text" placeholder="Search" aria-label="Search" />
        <Line width="11" height="11" viewBox="0 0 11 11"><circle cx="4.800" cy="4.800" r="4.200" /><path d="M8 8l3 3" /></Line>
      </SearchBox>
      <Tree>
        <TreeHeading><Caret />Diagrams</TreeHeading>
        <TreeList>
          {diagrams.map((d) => (
            <li key={d}>
              <TreeItem $active={d === "IMDB"}>
                <DiagramIcon />
                <TreeLabel>{d}</TreeLabel>
                {d === "IMDB" && <svg width="3" height="10" viewBox="0 0 3 10" fill="#fff"><path d="M0 0h2v2H0zM0 4h2v2H0zM0 8h2v2H0z" /></svg>}
              </TreeItem>
            </li>
          ))}
        </TreeList>
        <TreeHeading $plain>Subject Areas</TreeHeading>
      </Tree>
      <PanelFoot>
        <button aria-label="New diagram"><Line width="14" height="12" viewBox="0 0 14 12"><rect x=".5" y=".5" width="13" height="11" rx="1" /><path d="M3.500 6.500h3v3h-3zM7.500 2.500h3v3h-3z" /></Line></button>
        <button aria-label="New subject area"><DiagramIcon /></button>
        <button aria-label="Delete"><Line width="13" height="14" viewBox="0 0 13 14"><path d="M0 2.500h13M4.500 2.500v-2h4v2M1.500 2.500v9q0 2 2 2h6q2 0 2-2v-9M4.500 5.500v5M8.500 5.500v5" /></Line></button>
      </PanelFoot>
    </SidePanel>
  );
}

function Diagram() {
  return (
    <Canvas>
      <Wires>
        <path d="M395.500 307V415.500H646.500V537M641 526.500h10M390 294l5.500 6 5.500-6M395.500 294v7" />
        <circle cx="395.500" cy="303.500" r="2.800" />
        <path d="M957 271.500H725.500V537M720 526.500h10M970 266l-7 5.500 7 5.500M970 271.500h-8" />
        <circle cx="960" cy="271.500" r="2.800" />
      </Wires>
      {entities.map((e) => (
        <Entity key={e.name} $x={e.x} $y={e.y} $w={e.w}>
          <EntityName>{e.name}</EntityName>
          <EntityTable $h={e.h}>
            <KeyRows>
              <Field $first={e.first}><Cell>{e.key}</Cell><Cell $tone={tones.integer}>integer</Cell><Cell>PK</Cell></Field>
            </KeyRows>
            <FieldRows>
              {e.rows.map(([name, type, fk]) => (
                <Field key={name} $first={e.first} $fk={fk}><Cell>{name}</Cell><Cell $tone={tones[type]}>{type}</Cell><Cell /><Cell>{fk ? "FK" : ""}</Cell></Field>
              ))}
            </FieldRows>
          </EntityTable>
        </Entity>
      ))}
      <ZoomControl>
        <ZoomButton aria-label="Zoom in"><Line width="9" height="9" viewBox="0 0 9 9"><path d="M4.500 0v9M0 4.500h9" /></Line></ZoomButton>
        <ZoomButton aria-label="Zoom out"><Line width="9" height="9" viewBox="0 0 9 9"><path d="M0 4.500h9" /></Line></ZoomButton>
      </ZoomControl>
      <Status><span>100%</span><span>MySQL</span></Status>
      <Help>
        <Online />
        <button aria-label="Tutorials"><Line width="17" height="14" viewBox="0 0 17 14"><path d="M8.500.5l7.500 5-7.500 4-7.500-4zM3.500 7v5.500h10V7M1.500 6v3M15.500 6v3" /></Line></button>
        <button aria-label="Help"><svg width="16" height="16" viewBox="0 0 16 16"><circle cx="8" cy="8" r="7" fill="none" stroke="currentColor" /><text x="8" y="11.500" textAnchor="middle" fontSize="9" fill="currentColor">?</text></svg></button>
      </Help>
      <MiniMap>
        <MiniView>
          <svg width="96" height="55" viewBox="0 0 96 55"><path d="M22 15.500h13v7h12" fill="none" stroke="#33363d" /><path fill="#7b7b7b" stroke="#55565a" d="M5.500 10.500h16v12h-16zM47.500 20.500h16v7h-16zM35.500 14.500h5v2h-5z" /></svg>
        </MiniView>
        <Collapse aria-label="Collapse minimap"><Line width="11" height="11" viewBox="0 0 11 11"><path d="M0 0l10 10M10.500 2v8.500H2" /></Line></Collapse>
      </MiniMap>
    </Canvas>
  );
}

export default function App() {
  return (
    <>
      <Global />
      <Desktop>
        <SystemBar>
          <SystemMenus>
            <SystemMenu>Activities</SystemMenu>
            <SystemMenu>
              <svg width="16" height="16" viewBox="0 0 16 16" fill="#f0f0f0"><path d="M9 1c3 0 6 3 6 7.500A7 7 0 0 1 1 9c0-3 1-4 1-6l2 1.500L6 2v3l2 1-2 1.500C5 9 6.500 11 8.500 11S11 9 10.500 7 9 4 9 1z" /></svg>
              Firefox Web Browser
              <Caret />
            </SystemMenu>
          </SystemMenus>
          <Clock>{"Apr 7  17:30"}</Clock>
          <Tray>
            <svg width="16" height="16" viewBox="0 0 16 16"><path fill="#c9c9c9" d="M7.500 0L14 2.500V7c0 4-3 7-6.500 8.500C4 14 1 11 1 7V2.500z" /><circle cx="11" cy="10.500" r="4" fill="#2fae4e" /><path d="M9 10.500l1.500 1.500 2.500-3" fill="none" stroke="#fff" /></svg>
            <TrayGap />
            <svg width="16" height="14" viewBox="0 0 16 14"><path fill="#f0f0f0" d="M3 6c3-3 7-3 10 0L8 13z" /><path fill="none" stroke="#cfcfcf" strokeWidth="1.500" d="M1 4.500c4-4.500 10-4.500 14 0" /></svg>
            <svg width="16" height="14" viewBox="0 0 16 14"><path fill="#f0f0f0" d="M0 4.500h3L8 0v14L3 9.500H0z" /><path fill="none" stroke="#cfcfcf" d="M10 4c1.500 2 1.500 4 0 6M12.500 2c3 3 3 7 0 10" /></svg>
            <svg width="16" height="16" viewBox="0 0 16 16"><path fill="none" stroke="#f0f0f0" strokeWidth="1.500" d="M4 2.500h2V1h4v1.500h2V15H4z" /><path fill="#f0f0f0" d="M5 10h6v4H5z" /></svg>
            <Caret />
          </Tray>
        </SystemBar>
        <Dockbar />
        <Browser>
          <BrowserChrome />
          <AppShell>
            <Header />
            <Workspace>
              <RailNav />
              <Sidebar />
              <Stage>
                <DiagramTabs>
                  <RootPicker>
                    <RootSelect aria-label="Subject area"><option>-- Root --</option></RootSelect>
                    <Caret />
                  </RootPicker>
                  <TabScroller>{openTabs.map((t) => <DiagramTab key={t}>{t}</DiagramTab>)}</TabScroller>
                  <TabActions>
                    <button aria-label="Add diagram"><Line width="11" height="11" viewBox="0 0 11 11"><path d="M5.500 0v11M0 5.500h11" /></Line></button>
                    <button aria-label="Previous"><Line width="5" height="8" viewBox="0 0 5 8"><path d="M4.500.5L1 4l3.500 3.500" /></Line></button>
                    <button aria-label="Next"><Line width="5" height="8" viewBox="0 0 5 8"><path d="M.5.500L4 4 .5 7.500" /></Line></button>
                  </TabActions>
                </DiagramTabs>
                <Diagram />
              </Stage>
            </Workspace>
          </AppShell>
        </Browser>
      </Desktop>
    </>
  );
}
